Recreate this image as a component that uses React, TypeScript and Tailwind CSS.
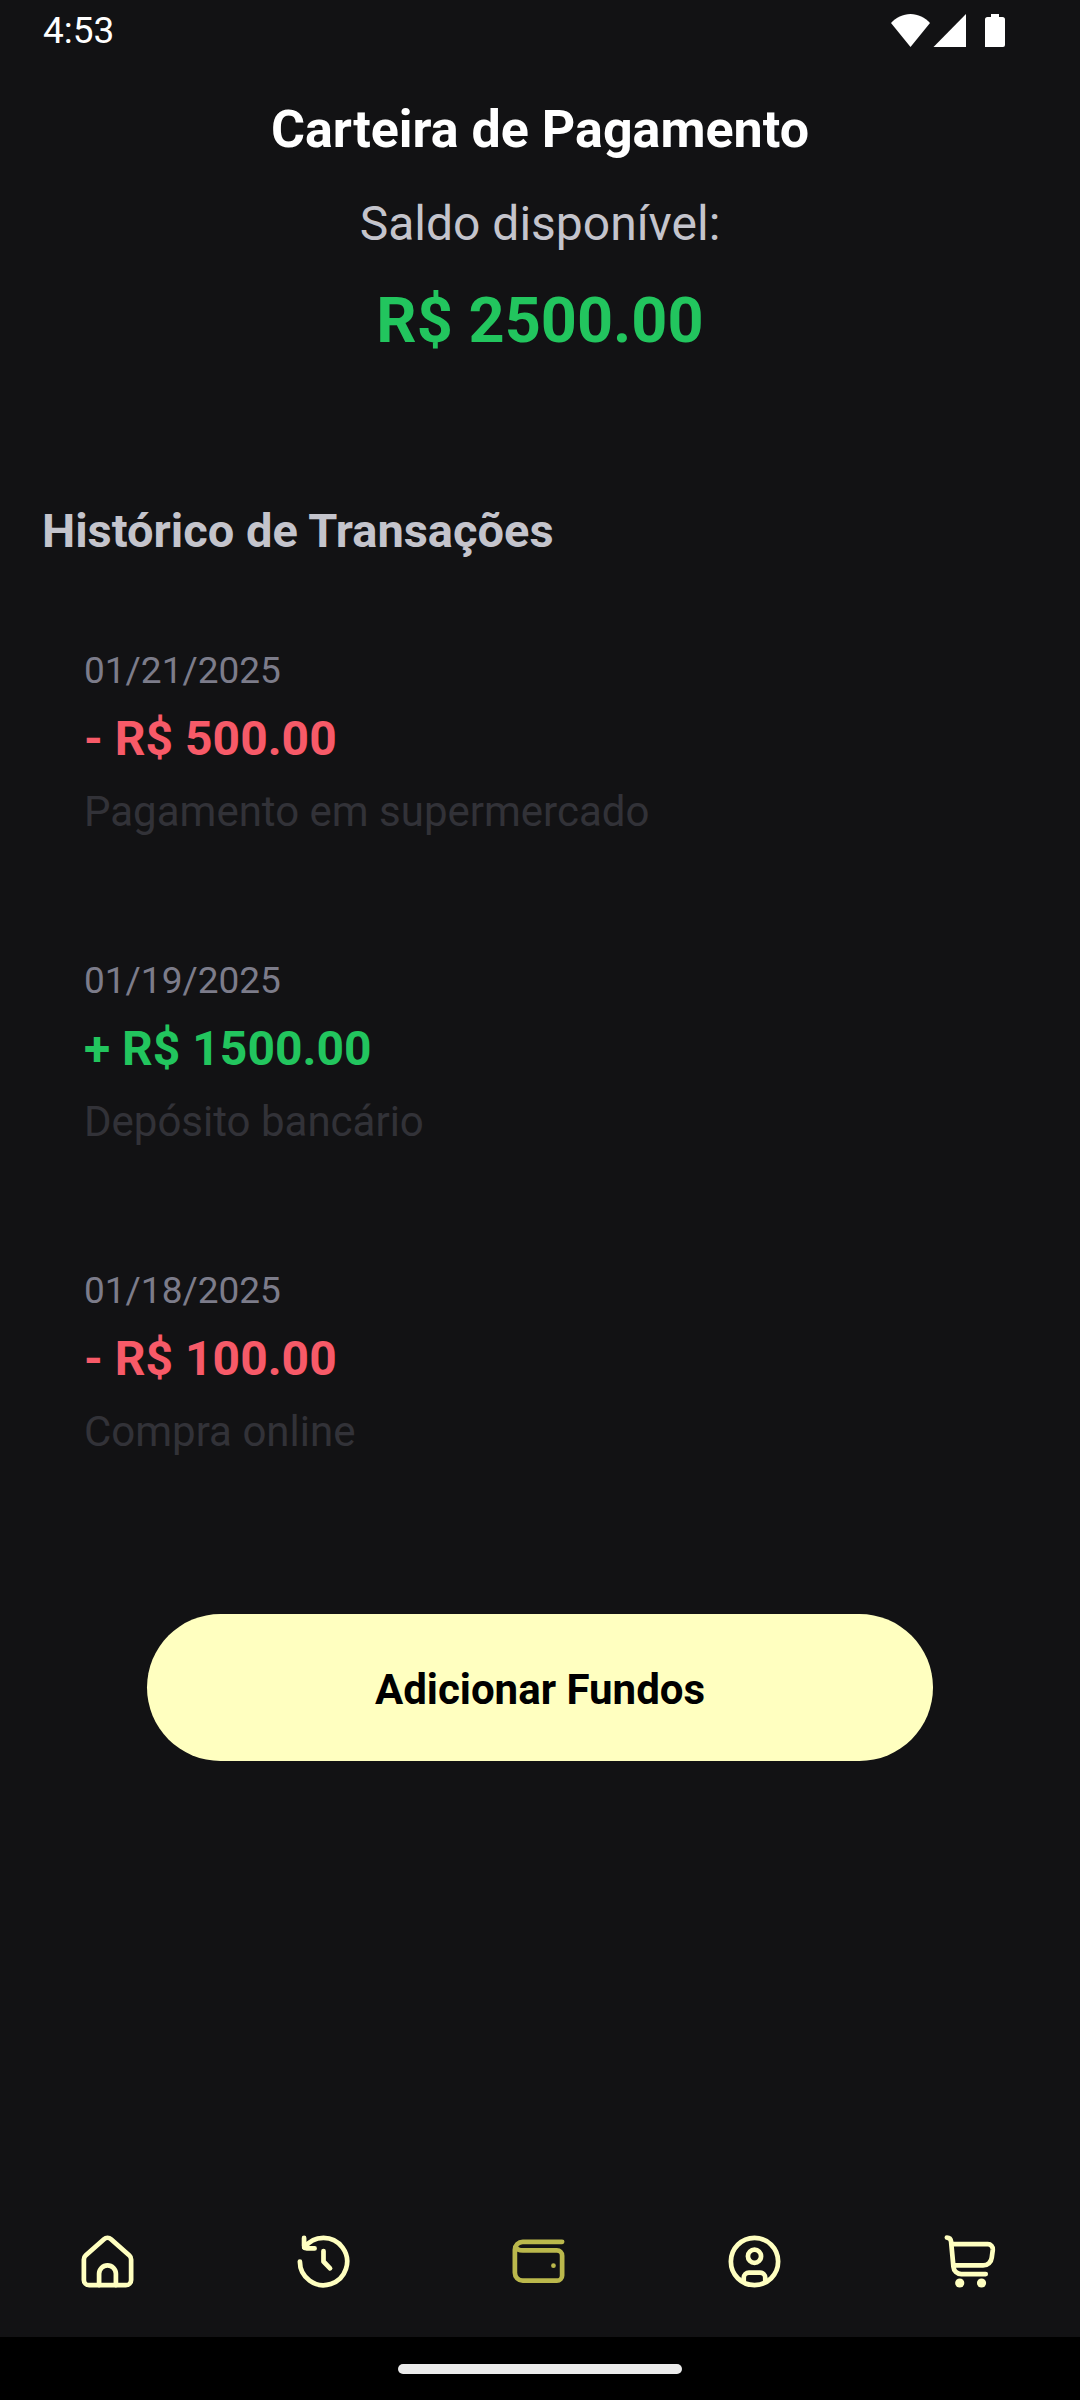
import React from 'react';

type Transaction = {
  date: string;
  iso: string;
  amount: string;
  income: boolean;
  description: string;
};

const transactions: Transaction[] = [
  { date: '01/21/2025', iso: '2025-01-21', amount: '- R$ 500.00', income: false, description: 'Pagamento em supermercado' },
  { date: '01/19/2025', iso: '2025-01-19', amount: '+ R$ 1500.00', income: true, description: 'Depósito bancário' },
  { date: '01/18/2025', iso: '2025-01-18', amount: '- R$ 100.00', income: false, description: 'Compra online' },
];

function StatusBar() {
  return (
    <div className="flex h-[62px] items-center justify-between pl-[43px] pr-[75px] text-white">
      <span className="text-[37px] leading-[62px]">4:53</span>
      <svg className="h-[34px] w-[114px]" viewBox="0 0 114 34" fill="currentColor" aria-hidden="true">
        <path d="M0 9C5 3.500 12 0 19.500 0S34 3.500 39 9L19.500 33Z" />
        <path d="M75 0V33H42.500Z" />
        <path d="M100 0h8v3h3.500a2.500 2.500 0 0 1 2.500 2.500V31a2 2 0 0 1-2 2H94V5.500A2.500 2.500 0 0 1 96.500 3H100Z" />
      </svg>
    </div>
  );
}

function TransactionItem({ item }: { item: Transaction }) {
  return (
    <li className="p-[42px]">
      <time dateTime={item.iso} className="block text-[37px] leading-[54px] text-[#7c7c8a]">
        {item.date}
      </time>
      <p className={`mt-1 text-[48px] font-bold leading-[74px] ${item.income ? 'text-[#22c55e]' : 'text-[#f75a68]'}`}>
        {item.amount}
      </p>
      <p className="mt-1 text-[42px] leading-[63px] text-[#323238]">{item.description}</p>
    </li>
  );
}

function NavItem({ label, active = false, children }: { label: string; active?: boolean; children: React.ReactNode }) {
  return (
    <a
      href="#"
      aria-label={label}
      aria-current={active ? 'page' : undefined}
      className={`flex h-[152px] flex-1 items-center justify-center ${active ? 'text-[#bbb84c]' : 'text-[#ffffc0]'}`}
    >
      <svg
        className="size-[63px]"
        viewBox="0 0 24 24"
        fill="none"
        stroke="currentColor"
        strokeWidth="1.8"
        strokeLinecap="round"
        strokeLinejoin="round"
        aria-hidden="true"
      >
        {children}
      </svg>
    </a>
  );
}

export default function App() {
  return (
    <div className="flex min-h-screen flex-col bg-[#121214] font-['Roboto',sans-serif]">
      <StatusBar />
      <main className="flex flex-1 flex-col px-[42px] pt-[31px]">
        <header className="flex flex-col items-center text-center">
          <h1 className="text-[52px] font-bold leading-[74px] text-white">Carteira de Pagamento</h1>
          <p className="mt-5 text-[48px] leading-[74px] text-[#c4c4cc]">Saldo disponível:</p>
          <p className="mt-[18px] text-[63px] font-bold leading-[84px] text-[#22c55e]">R$ 2500.00</p>
        </header>
        <section className="mt-[131px]">
          <h2 className="text-[47px] font-bold leading-[74px] text-[#c4c4cc]">Histórico de Transações</h2>
          <ul className="mt-[34px] flex flex-col gap-[27px]">
            {transactions.map((item) => (
              <TransactionItem key={item.iso} item={item} />
            ))}
          </ul>
        </section>
        <button
          type="button"
          className="mx-[105px] mt-[109px] h-[147px] rounded-full bg-[#ffffc0] pt-1 text-[42px] font-bold leading-[63px] text-black"
        >
          Adicionar Fundos
        </button>
      </main>
      <nav aria-label="Principal" className="flex pr-[2px]">
        <NavItem label="Início">
          <path d="M3 11.200a2 2 0 0 1 .65-1.480l7-6.200a2 2 0 0 1 2.700 0l7 6.200a2 2 0 0 1 .65 1.480V19a2 2 0 0 1-2 2H5a2 2 0 0 1-2-2Z" />
          <path d="M8.800 21v-4.300a3.200 3.200 0 0 1 6.400 0V21" />
        </NavItem>
        <NavItem label="Histórico">
          <path d="M3 12a9 9 0 1 0 1.700-5.260" />
          <path d="M4.600 3v3a1 1 0 0 0 1 1h3" />
          <path d="M12 8v4l2.500 2.600" />
        </NavItem>
        <NavItem label="Carteira" active>
          <path d="M21 4.500H6a3 3 0 0 0-3 3v8.800a3 3 0 0 0 3 3h13a2 2 0 0 0 2-2V9.800a2 2 0 0 0-2-2H6c-1.500 0-2.400-.6-2.800-1.400" />
          <circle cx="17.700" cy="13.600" r="0.900" fill="currentColor" stroke="none" />
        </NavItem>
        <NavItem label="Perfil">
          <circle cx="12" cy="12" r="9" />
          <circle cx="12" cy="10" r="2.500" />
          <path d="M7.900 19.800v-1.600a2 2 0 0 1 2-2h4.200a2 2 0 0 1 2 2v1.600" />
        </NavItem>
        <NavItem label="Carrinho">
          <path d="M3 2.900c.9 0 1.500.6 1.600 1.500L5.500 14a3 3 0 0 0 3 2.800h9.300" />
          <path d="M4.900 5.400h13.700a1.900 1.900 0 0 1 1.900 2.100l-.4 3a3.300 3.300 0 0 1-3.300 3H5.800" />
          <circle cx="7.900" cy="20.200" r="1.750" fill="currentColor" stroke="none" />
          <circle cx="16.200" cy="20.200" r="1.750" fill="currentColor" stroke="none" />
        </NavItem>
      </nav>
      <div className="flex h-[63px] items-center justify-center bg-black">
        <div className="h-[10px] w-[284px] rounded-full bg-[#ebebeb]" />
      </div>
    </div>
  );
}
